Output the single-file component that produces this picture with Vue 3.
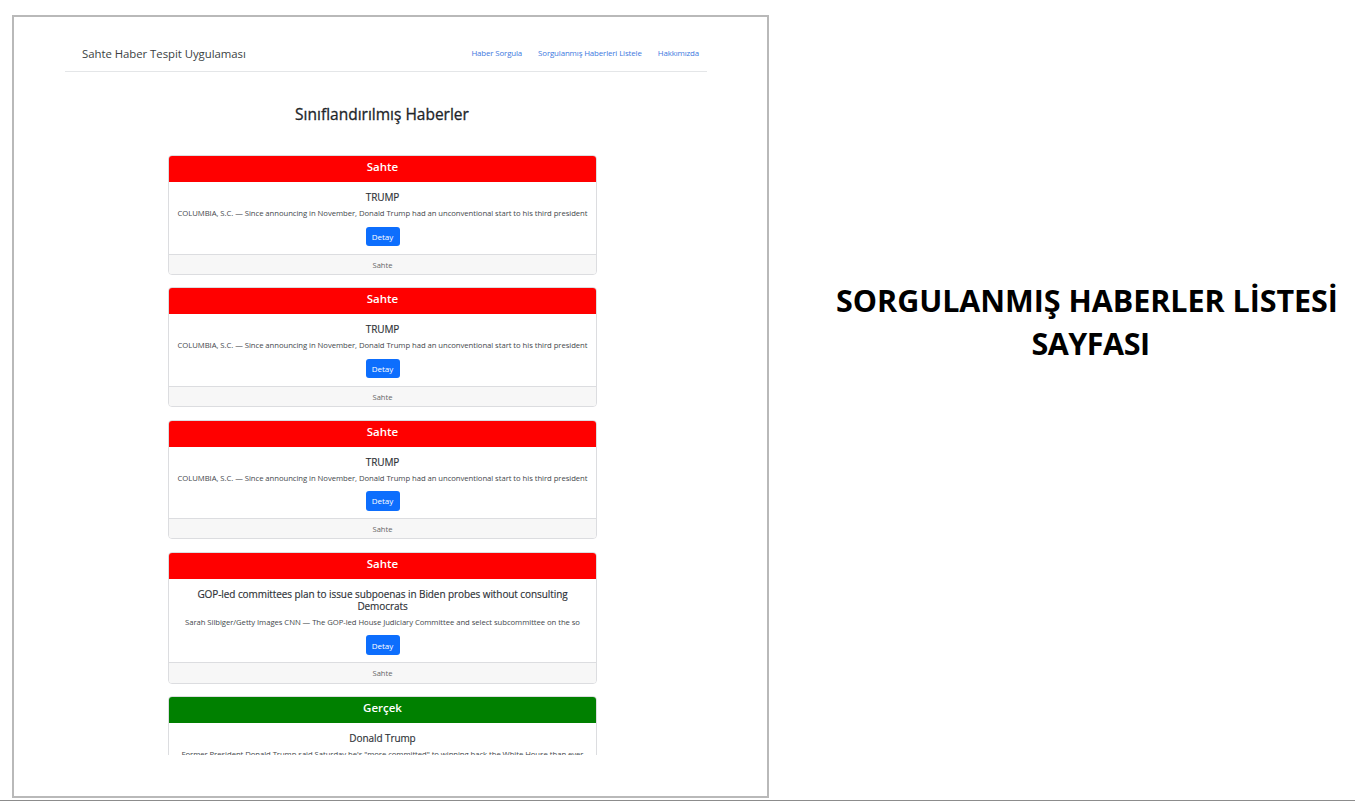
<template>
  <div class="slide">
    <div class="frame">
      <div class="viewport">
        <div class="container">
          <header class="navbar">
            <span class="brand">Sahte Haber Tespit Uygulaması</span>
            <nav class="links">
              <a v-for="link in links" :key="link" href="#" @click.prevent>{{ link }}</a>
            </nav>
          </header>
          <h1 class="page-title">Sınıflandırılmış Haberler</h1>
          <div class="list">
            <div v-for="(item, i) in news" :key="i" class="card">
              <div class="card-head" :class="item.label === 'Sahte' ? 'fake' : 'real'">{{ item.label }}</div>
              <div class="card-body">
                <h5 class="card-title">{{ item.title }}</h5>
                <p class="card-text">{{ item.text }}</p>
                <button type="button" class="btn">Detay</button>
              </div>
              <div class="card-foot">{{ item.label }}</div>
            </div>
          </div>
        </div>
      </div>
    </div>
    <div class="caption">SORGULANMIŞ HABERLER LİSTESİ<br /><span class="caption-sub">SAYFASI</span></div>
  </div>
</template>

<script setup>
const links = ['Haber Sorgula', 'Sorgulanmış Haberleri Listele', 'Hakkımızda']

const trump = {
  label: 'Sahte',
  title: 'TRUMP',
  text: 'COLUMBIA, S.C. — Since announcing in November, Donald Trump had an unconventional start to his third president',
}

const news = [
  trump,
  trump,
  trump,
  {
    label: 'Sahte',
    title: 'GOP-led committees plan to issue subpoenas in Biden probes without consulting Democrats',
    text: 'Sarah Silbiger/Getty Images CNN — The GOP-led House Judiciary Committee and select subcommittee on the so',
  },
  {
    label: 'Gerçek',
    title: 'Donald Trump',
    text: 'Former President Donald Trump said Saturday he\'s "more committed" to winning back the White House than ever',
  },
]
</script>

<style>
html, body {
  margin: 0;
  background: #fff;
}
</style>

<style scoped>
.slide {
  display: flex;
  box-sizing: border-box;
  height: 801px;
  padding: 15px 0 2px 12px;
  border-bottom: 1px solid #8c8c8c;
  overflow: hidden;
  font-family: "Open Sans", "Noto Sans", sans-serif;
  color: #212529;
}
.frame {
  flex: none;
  box-sizing: border-box;
  width: 757px;
  height: 783px;
  border: 2px solid #b9b9b9;
  background: #fff;
}
.viewport {
  height: 738px;
  overflow: hidden;
}
.container {
  width: 642px;
  margin-left: 51px;
}
.navbar {
  display: flex;
  align-items: center;
  justify-content: space-between;
  box-sizing: border-box;
  height: 55px;
  padding: 18px 8px 0 17px;
  border-bottom: 1px solid #e4e6e8;
}
.brand {
  font-size: 11.4px;
  letter-spacing: -0.05px;
  color: #3b3f43;
}
.links {
  display: flex;
  gap: 16px;
}
.links a {
  font-size: 7.9px;
  letter-spacing: -0.14px;
  color: #3d78e0;
  text-decoration: none;
}
.page-title {
  margin: 30px 8px 0 0;
  font-size: 15.5px;
  font-weight: 500;
  line-height: 24px;
  letter-spacing: 0;
  -webkit-text-stroke: 0.3px #212529;
  text-align: center;
}
.list {
  display: flex;
  flex-direction: column;
  gap: 12.63px;
  width: 429px;
  margin: 29px 0 0 103px;
}
.card {
  box-sizing: border-box;
  border: 1px solid #dcdde0;
  border-radius: 4px;
  background: #fff;
  overflow: hidden;
  text-align: center;
}
.card-head {
  height: 27px;
  margin: -1px -1px 0;
  font-size: 11.5px;
  font-weight: 600;
  line-height: 23px;
  color: #fff;
}
.fake {
  background: #f00;
}
.real {
  background: #008000;
}
.card-body {
  padding: 9px 8px 7.5px;
}
.card-title {
  margin: 0;
  font-size: 10px;
  font-weight: 500;
  line-height: 12px;
  letter-spacing: -0.08px;
  -webkit-text-stroke: 0.15px #2d3136;
  color: #2d3136;
}
.card-text {
  margin: 4px 0 7.5px;
  font-size: 7.7px;
  line-height: 12px;
  white-space: nowrap;
  letter-spacing: -0.05px;
  color: #44484c;
}
.btn {
  display: block;
  width: 34px;
  height: 19.5px;
  margin: 0 auto;
  padding: 0;
  border: none;
  border-radius: 3px;
  background: #0d6efd;
  font-family: inherit;
  font-size: 8px;
  color: #fff;
}
.card-foot {
  height: 19.2px;
  border-top: 1px solid #dcdde0;
  background: #f7f7f7;
  font-size: 7.6px;
  line-height: 21px;
  color: #666;
}
.caption {
  flex: 1;
  padding: 264px 0 0 50px;
  font-size: 30.5px;
  font-weight: 700;
  line-height: 43px;
  letter-spacing: -0.05px;
  text-align: center;
  color: #000;
}
.caption-sub {
  margin-left: 7px;
  letter-spacing: -0.5px;
}
</style>
